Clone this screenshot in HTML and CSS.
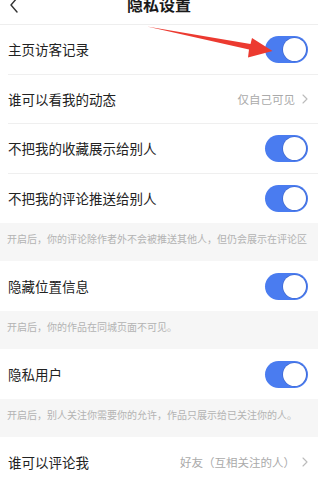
FILE: index.html
```html
<!DOCTYPE html>
<html lang="zh">
<head>
<meta charset="utf-8">
<link rel="stylesheet" href="styles.css">
</head>
<body>
<div class="page">
  <header class="header">
    <svg class="back" width="10" height="16" viewBox="0 0 10 16"><path d="M8 1 L2 8 L8 15" fill="none" stroke="#333" stroke-width="1.4" stroke-linecap="round" stroke-linejoin="round"/></svg>
    <h1 class="title">隐私设置</h1>
  </header>

  <section class="group">
    <div class="row"><div class="row-inner"><span class="label">主页访客记录</span><span class="toggle"><span class="knob"></span></span></div></div>
    <div class="row"><div class="row-inner"><span class="label">谁可以看我的动态</span><span class="value">仅自己可见<svg class="chev" width="6" height="10" viewBox="0 0 6 10"><path d="M1 1 L5 5 L1 9" fill="none" stroke="#bbb" stroke-width="1.1" stroke-linecap="round" stroke-linejoin="round"/></svg></span></div></div>
    <div class="row"><div class="row-inner"><span class="label">不把我的收藏展示给别人</span><span class="toggle"><span class="knob"></span></span></div></div>
    <div class="row last"><div class="row-inner"><span class="label">不把我的评论推送给别人</span><span class="toggle"><span class="knob"></span></span></div></div>
  </section>
  <div class="note">开启后，你的评论除作者外不会被推送其他人，但仍会展示在评论区</div>

  <section class="group">
    <div class="row tall last"><div class="row-inner"><span class="label">隐藏位置信息</span><span class="toggle"><span class="knob"></span></span></div></div>
  </section>
  <div class="note">开启后，你的作品在同城页面不可见。</div>

  <section class="group">
    <div class="row tall last"><div class="row-inner"><span class="label">隐私用户</span><span class="toggle"><span class="knob"></span></span></div></div>
  </section>
  <div class="note">开启后，别人关注你需要你的允许，作品只展示给已关注你的人。</div>

  <section class="group">
    <div class="row tall last"><div class="row-inner"><span class="label">谁可以评论我</span><span class="value">好友（互相关注的人）<svg class="chev" width="6" height="10" viewBox="0 0 6 10"><path d="M1 1 L5 5 L1 9" fill="none" stroke="#bbb" stroke-width="1.1" stroke-linecap="round" stroke-linejoin="round"/></svg></span></div></div>
  </section>

  <svg class="arrow" width="318" height="80" viewBox="0 0 318 80"><polygon points="147,26.5 250.5,44 252,38 272.5,51 248,57.5 249,49.5" fill="#ec3a30"/></svg>
</div>
</body>
</html>
```

FILE: styles.css
```css
* { box-sizing: border-box; margin: 0; padding: 0; }
html, body { width: 318px; height: 482px; overflow: hidden; background: #fff; }
body {
  font-family: "Noto Sans CJK SC", "Noto Sans", sans-serif;
  color: #222;
}
.page { position: relative; display: flow-root; }
.header {
  margin-top: -16px;
  height: 41px;
  border-bottom: 1px solid #eeeeee;
  display: flex;
  align-items: center;
  justify-content: center;
  position: relative;
}
.back { position: absolute; left: 9px; top: 13px; }
.title { font-size: 16px; font-weight: 700; line-height: 20px; color: #1a1a1a; }
.group { background: #fff; }
.row { padding-left: 8px; height: 49.5px; }
.row.tall { height: 50px; }
.row-inner {
  height: 100%;
  display: flex;
  align-items: center;
  justify-content: space-between;
  padding-right: 10px;
  border-bottom: 1px solid #efefef;
}
.row.last .row-inner { border-bottom: none; }
.label { font-size: 13.5px; line-height: 18px; color: #222; }
.value { font-size: 11.5px; color: #aaa; display: flex; align-items: center; gap: 7px; }
.chev { display: block; }
.toggle {
  width: 43px; height: 27px; border-radius: 14px;
  background: #4a7cf0;
  display: flex; align-items: center; justify-content: flex-end;
  padding-right: 2px;
}
.knob {
  width: 23px; height: 23px; border-radius: 50%;
  background: #fff;
  box-shadow: 0 0 0 0.6px rgba(40, 70, 160, 0.5);
}
.note {
  background: #f6f6f6;
  height: 38px;
  padding: 9px 7px 0;
  font-size: 10px;
  line-height: 13px;
  color: #b3b3b3;
  white-space: nowrap;
}
.arrow { position: absolute; left: 0; top: 0; pointer-events: none; }
```
